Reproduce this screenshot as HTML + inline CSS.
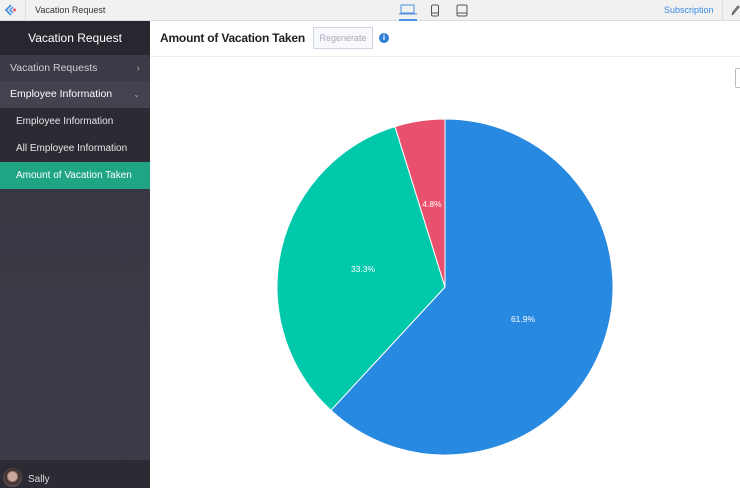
<!DOCTYPE html><html><head><style>
body{margin:0;width:740px;height:488px;overflow:hidden;font-family:"Liberation Sans",sans-serif;background:#fff;position:relative}
.top{position:absolute;left:0;top:0;width:740px;height:20px;background:#f1f1f2;border-bottom:1px solid #dcdcdc}
.sb{position:absolute;left:0;top:21px;width:150px;height:467px;background:linear-gradient(#36353f,#3d3c49)}
.it{position:absolute;left:0;width:150px;color:#e6e6e9;font-size:10.5px;box-sizing:border-box}
</style></head><body>
<div class="top">
<svg style="position:absolute;left:4px;top:3px" width="14" height="14" viewBox="0 0 14 14"><path d="M7 2 L2 7 L7 12" fill="none" stroke="#3a8de0" stroke-width="1.6"/><path d="M9 4 L6 7 L9 10" fill="none" stroke="#3a8de0" stroke-width="1.4"/><circle cx="10.5" cy="7" r="1.5" fill="#e8506b"/></svg>
<div style="position:absolute;left:25px;top:0;height:20px;border-left:1px solid #ddd"></div>
<div style="position:absolute;left:35px;top:5px;font-size:9px;color:#333">Vacation Request</div>
<svg style="position:absolute;left:398px;top:4px" width="20" height="12"><rect x="3" y="1" width="13" height="8" fill="none" stroke="#4a90e2" stroke-width="1"/><path d="M1 10H19" stroke="#4a90e2"/></svg>
<div style="position:absolute;left:399px;top:19px;width:18px;height:2px;background:#4a90e2"></div>
<svg style="position:absolute;left:430px;top:4px" width="10" height="13"><rect x="1.5" y="1" width="7" height="11" rx="1.5" fill="none" stroke="#555"/><path d="M2 9H8" stroke="#555"/></svg>
<svg style="position:absolute;left:456px;top:4px" width="12" height="13"><rect x="1" y="1" width="10" height="11" rx="1.5" fill="none" stroke="#555"/><path d="M1 9H11" stroke="#555"/></svg>
<div style="position:absolute;left:664px;top:5px;font-size:9px;color:#3a8de0">Subscription</div>
<div style="position:absolute;left:722px;top:0;height:20px;border-left:1px solid #ddd"></div>
<svg style="position:absolute;left:731px;top:4px" width="9" height="12"><path d="M1 11L2 8L7 2L8 3L3 9Z" fill="none" stroke="#555"/></svg>
</div>
<div class="sb">
<div class="it" style="top:0;height:34px;background:#28272f;text-align:center;line-height:34px;font-size:12px;color:#fff">Vacation Request</div>
<div class="it" style="top:34px;height:26px;background:#3b3a46;line-height:26px;padding-left:10px;color:#cfcfd4">Vacation Requests<span style="position:absolute;right:10px;color:#aaa">›</span></div>
<div class="it" style="top:60px;height:27px;background:#43424e;line-height:27px;padding-left:10px;color:#fff">Employee Information<span style="position:absolute;right:10px;color:#aaa;font-size:8px">⌄</span></div>
<div class="it" style="top:87px;height:54px;background:#2c2b33"></div>
<div class="it" style="top:87px;height:27px;line-height:27px;padding-left:16px;font-size:10px">Employee Information</div>
<div class="it" style="top:114px;height:27px;line-height:27px;padding-left:16px;font-size:10px">All Employee Information</div>
<div class="it" style="top:141px;height:27px;background:#1fa584;line-height:27px;padding-left:16px;font-size:10px;color:#fff">Amount of Vacation Taken</div>
<div class="it" style="top:439px;height:28px;background:#2c2b33"></div>
<div style="position:absolute;left:3px;top:447px;width:19px;height:19px;border-radius:50%;background:radial-gradient(circle at 50% 45%,#c9a79a 0 30%,#3a2a2a 45%,#8a7d80)"></div>
<div style="position:absolute;left:28px;top:453px;font-size:10px;color:#ddd">Sally</div>
</div>
<div style="position:absolute;left:150px;top:21px;width:590px;height:35px;border-bottom:1px solid #ececec"></div>
<div style="position:absolute;left:160px;top:31px;font-size:12px;font-weight:bold;color:#222;letter-spacing:-0.2px">Amount of Vacation Taken</div>
<div style="position:absolute;left:313px;top:27px;width:58px;height:20px;border:1px solid #cdd3e0;background:#f7f8fb;color:#aab;font-size:9px;line-height:20px;text-align:center">Regenerate</div>
<div style="position:absolute;left:379px;top:33px;width:10px;height:10px;border-radius:50%;background:#2f7fd6;color:#fff;font-size:8px;line-height:10px;text-align:center;font-weight:bold">i</div>
<div style="position:absolute;left:735px;top:68px;width:8px;height:18px;border:1px solid #bbb;border-radius:2px"></div>
<svg style="position:absolute;left:0;top:0" width="740" height="488">
<path d="M445 287 L445 119 A168 168 0 1 1 330.9 410.3 Z" fill="#2889e0" stroke="#fff" stroke-width="1"/>
<path d="M445 287 L330.9 410.3 A168 168 0 0 1 395 126.6 Z" fill="#00c8aa" stroke="#fff" stroke-width="1"/>
<path d="M445 287 L395 126.6 A168 168 0 0 1 445 119 Z" fill="#e9506d" stroke="#fff" stroke-width="1"/>
<g font-family="Liberation Sans" font-size="8.5" fill="#fff" text-anchor="middle"><text x="523" y="322">61.9%</text><text x="363" y="272">33.3%</text><text x="432" y="207">4.8%</text></g>
</svg>
</body></html>
